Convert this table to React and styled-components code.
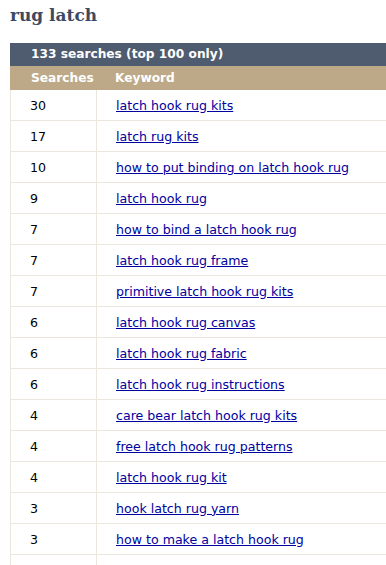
import styled, { createGlobalStyle } from 'styled-components'

const GlobalStyle = createGlobalStyle`
  body {
    margin: 0;
    background: #fff;
    overflow: hidden;
  }
`

const rows = [
  [30, 'latch hook rug kits'],
  [17, 'latch rug kits'],
  [10, 'how to put binding on latch hook rug'],
  [9, 'latch hook rug'],
  [7, 'how to bind a latch hook rug'],
  [7, 'latch hook rug frame'],
  [7, 'primitive latch hook rug kits'],
  [6, 'latch hook rug canvas'],
  [6, 'latch hook rug fabric'],
  [6, 'latch hook rug instructions'],
  [4, 'care bear latch hook rug kits'],
  [4, 'free latch hook rug patterns'],
  [4, 'latch hook rug kit'],
  [3, 'hook latch rug yarn'],
  [3, 'how to make a latch hook rug'],
]

const Page = styled.div`
  padding: 4px 0 0 10px;
  width: 400px;
`

const Title = styled.h1`
  margin: 0;
  font-family: Georgia, "DejaVu Serif", serif;
  font-weight: bold;
  font-size: 17px;
  line-height: 22px;
  color: #3d4a63;
`

const Table = styled.div`
  margin-top: 17px;
  font-family: "DejaVu Sans", Verdana, sans-serif;
  font-size: 12.6px;
`

const Caption = styled.div`
  background: #4f5b6f;
  color: #fff;
  font-weight: bold;
  font-size: 12.2px;
  height: 23px;
  line-height: 23px;
  padding-left: 21px;
`

const Row = styled.div`
  display: grid;
  grid-template-columns: 86px 1fr;
  height: ${(p) => (p.$head ? '24px' : '31px')};
  background: ${(p) => (p.$head ? '#bda987' : '#fff')};
  border-left: ${(p) => (p.$head ? 'none' : '1px solid #ece7dc')};
  border-bottom: ${(p) => (p.$head ? 'none' : '1px solid #ece7dc')};
  box-sizing: border-box;
`

const Cell = styled.div`
  display: flex;
  align-items: center;
  padding-left: ${(p) => (p.$head && p.$first ? '21px' : '19px')};
  border-right: ${(p) => (p.$first && !p.$head ? '1px solid #ece7dc' : 'none')};
  color: ${(p) => (p.$head ? '#fff' : '#000')};
  font-weight: ${(p) => (p.$head ? 'bold' : 'normal')};
  font-size: ${(p) => (p.$head ? '12.2px' : 'inherit')};
`

const KeywordLink = styled.a`
  color: #0000a0;
  text-decoration: underline;
`

export default function App() {
  return (
    <Page>
      <GlobalStyle />
      <Title>rug latch</Title>
      <Table>
        <Caption>133 searches (top 100 only)</Caption>
        <Row $head>
          <Cell $head $first>Searches</Cell>
          <Cell $head>Keyword</Cell>
        </Row>
        {rows.map(([n, kw], i) => (
          <Row key={i}>
            <Cell $first>{n}</Cell>
            <Cell>
              <KeywordLink href="#">{kw}</KeywordLink>
            </Cell>
          </Row>
        ))}
        <Row>
          <Cell $first />
          <Cell />
        </Row>
      </Table>
    </Page>
  )
}
